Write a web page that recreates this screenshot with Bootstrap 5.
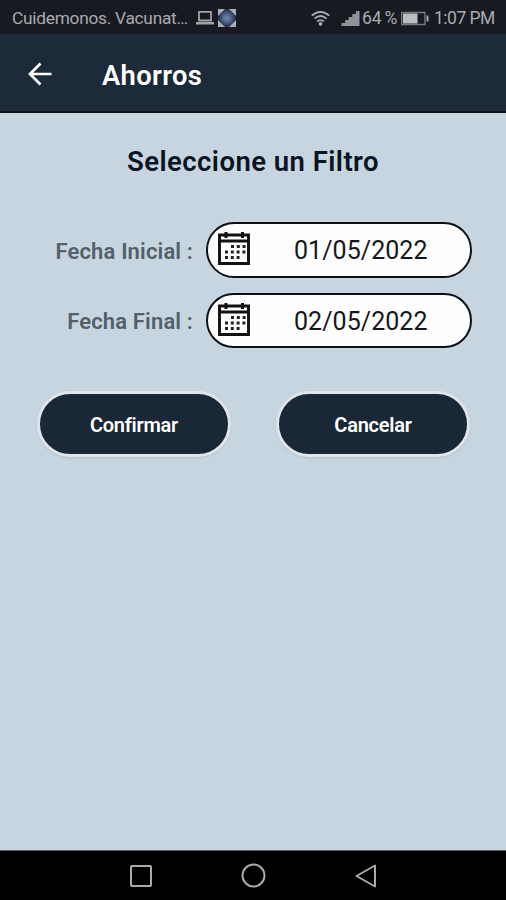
<!DOCTYPE html>
<html lang="es">
<head>
<meta charset="utf-8">
<meta name="viewport" content="width=device-width, initial-scale=1">
<title>Ahorros</title>
<link href="https://cdn.jsdelivr.net/npm/bootstrap@5.3.0/dist/css/bootstrap.min.css" rel="stylesheet">
<style>
body{font-family:Roboto,"Liberation Sans",sans-serif;background:#c7d5e0;color:#0a1422}
svg{display:block;flex:none}
.screen{height:900px;overflow:hidden}
.status{height:34px;background:#171a21;color:#a9abb0;font-size:17.3px;line-height:34px;padding:2px 11px 0 12px}
.notice{width:184px;letter-spacing:-.25px}
.pct{width:39px;font-size:17.5px;word-spacing:-1px;letter-spacing:-.2px}
.clock{width:61px;font-size:17.5px;letter-spacing:-.5px;margin-left:5px}
.appbar{height:79px;background:#1d2a39;border-bottom:2px solid #0b121b;padding:2px 0 0 28px}
.appbar h1{font-size:27.3px;font-weight:600;line-height:32px;color:#fff;letter-spacing:.35px;margin:4px 0 0 50px}
.heading{font-size:27.5px;font-weight:600;line-height:32px;margin-top:33px;letter-spacing:.45px}
.filters{margin-top:44px;gap:15px;padding-right:34px}
.caption{width:193px;font-size:22px;font-weight:600;color:#535f6a;letter-spacing:.15px;margin-right:13px;padding-top:3px}
.datebox{width:266px;height:55.5px;border:2.5px solid #0d1117;border-radius:28px;background:#fefefe;padding-left:10px}
.datebox svg{margin-bottom:3px}
.dateval{font-size:25px;color:#15171b;letter-spacing:.05px;margin-left:44px;padding-top:2px}
.actions{margin-top:43px;padding:0 36px 0 37px}
.pill{width:194px;height:66px;border:3px solid #e1e5eb;border-radius:33px;background:#1a2736;color:#fff;font-size:20px;font-weight:600;letter-spacing:-.25px;box-shadow:0 1px 2px #8f9ca855;padding:1px 0 0}
.pill:hover{background:#1a2736;color:#fff;border-color:#e1e5eb}
.navkeys{height:50px;background:#000;border-top:1px solid #59616a;padding-left:129px;gap:88px}
</style>
<script src="https://cdn.jsdelivr.net/npm/bootstrap@5.3.0/dist/js/bootstrap.bundle.min.js"></script>
</head>
<body>
<svg width="0" height="0" class="position-absolute" aria-hidden="true">
<symbol id="calendar" viewBox="0 0 32 34">
<path d="M1.500 4h29v28.500h-29zM1.500 10h29" fill="none" stroke="#111" stroke-width="2.900"/>
<path d="M8 1v6M24.500 1v6" stroke="#111" stroke-width="3"/>
<path d="M13 15.500h16M7 21h22M7 26.500h16" fill="none" stroke="#222" stroke-width="3" stroke-dasharray="3 2.800"/>
</symbol>
</svg>
<div class="screen d-flex flex-column">
<div class="status d-flex align-items-center">
<span class="notice text-nowrap">Cuidemonos. Vacunat…</span>
<svg width="18" height="16" viewBox="0 0 18 16"><path d="M3 1.800h12v8.700H3z" fill="none" stroke="#a1a3a7" stroke-width="1.800"/><path d="M0 12h18v2.500H0z" fill="#a1a3a7"/></svg>
<svg class="ms-1" width="18" height="18" viewBox="0 0 18 18"><defs><radialGradient id="orb"><stop offset="0" stop-color="#7589aa"/><stop offset=".6" stop-color="#4d6287"/><stop offset="1" stop-color="#303f59"/></radialGradient></defs><path d="M0 0h18v18H0z" fill="#aaafb6"/><path d="M7 0h4l7 7v4l-7 7H7l-7-7V7z" fill="#26344b"/><circle cx="9" cy="9" r="7.500" fill="url(#orb)"/></svg>
<div class="ms-auto d-flex align-items-center">
<svg width="19" height="17" viewBox="0 0 20 17"><g fill="none" stroke="#adafb3" stroke-width="1.900"><path d="M.8 5.500Q10-2.500 19.200 5.500M3.700 8.700Q10 3 16.300 8.700M6.500 11.700Q10 8.800 13.500 11.700"/></g><circle cx="10" cy="14.200" r="1.900" fill="#adafb3"/></svg>
<svg class="ms-2" width="24" height="17" viewBox="0 0 24 17"><path d="M3.500 16v-3h3.600v-3h3.600V7h3.600V4h3.600V1h3.600v15z" fill="#919397"/></svg>
<span class="pct text-nowrap">64 %</span>
<svg width="28" height="15" viewBox="0 0 28 15"><path d="M.7 1.500h23.300v12H.7z" fill="none" stroke="#77797f" stroke-width="1.400"/><path d="M2 2.500h14.500v10H2z" fill="#bbbdc1"/><path d="M25.500 4.500h2v6h-2z" fill="#a1a3a7"/></svg>
<span class="clock text-nowrap">1:07 PM</span>
</div>
</div>
<header class="appbar d-flex align-items-center">
<svg width="24" height="24" viewBox="0 0 24 24" role="img" aria-label="Volver"><path d="M23.500 12H2.500M12.500 1.500L2 12l10.500 10.500" fill="none" stroke="#fff" stroke-width="2.700"/></svg>
<h1>Ahorros</h1>
</header>
<main class="flex-grow-1">
<h2 class="heading text-center mb-0">Seleccione un Filtro</h2>
<div class="filters d-flex flex-column">
<div class="d-flex align-items-center">
<span class="caption text-end text-nowrap">Fecha Inicial :</span>
<div class="datebox d-flex align-items-center"><svg width="32" height="34"><use href="#calendar"/></svg><span class="dateval">01/05/2022</span></div>
</div>
<div class="d-flex align-items-center">
<span class="caption text-end text-nowrap">Fecha Final :</span>
<div class="datebox d-flex align-items-center"><svg width="32" height="34"><use href="#calendar"/></svg><span class="dateval">02/05/2022</span></div>
</div>
</div>
<div class="actions d-flex justify-content-between">
<button type="button" class="btn pill">Confirmar</button>
<button type="button" class="btn pill">Cancelar</button>
</div>
</main>
<nav class="navkeys d-flex align-items-center">
<svg width="24" height="24" viewBox="0 0 24 24"><rect x="2" y="2" width="20" height="20" rx="1" fill="none" stroke="#aaa" stroke-width="2"/></svg>
<svg width="25" height="25" viewBox="0 0 25 25"><circle cx="12.500" cy="12.500" r="11" fill="none" stroke="#aaa" stroke-width="2"/></svg>
<svg width="24" height="24" viewBox="0 0 24 24"><path d="M21 1.500v21L2.500 12z" fill="none" stroke="#aaa" stroke-width="2" stroke-linejoin="round"/></svg>
</nav>
</div>
</body>
</html>
